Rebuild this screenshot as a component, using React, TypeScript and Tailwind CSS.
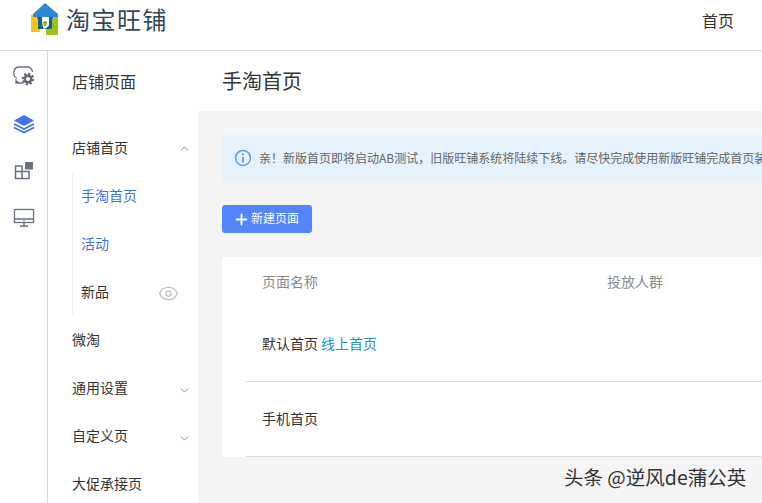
import { ChevronDown, ChevronUp, Eye, Plus } from 'lucide-react';

const cjk = { fontFamily: '"Noto Sans CJK SC", "Liberation Sans", sans-serif' };

function Logo() {
  return (
    <svg width="28" height="32" viewBox="0 0 28 32" className="shrink-0">
      <path d="M0 12 L9 10 V29 H0 Z" fill="#f5c518" />
      <path d="M15 25 H27 V32 H15 Z M19 12 H27 V25 H19 Z" fill="#9cc31c" />
      <path d="M14 0 L27 11 V14 H22 V16 H6 V14 H2 V11 Z" fill="#2f86d6" />
      <path d="M7 14 H21 V26 H7 Z" fill="#1b5f8f" />
      <path d="M11 14 H18 V21 C18 24 15 25 13 26 C11 23 11 19 11 14 Z" fill="#fff" />
      <path d="M12 19 C14 17 16 18 16 20 C16 22 14 23 13 24 Z" fill="#7fb52a" />
    </svg>
  );
}

function RailIcons() {
  return (
    <div className="flex flex-col items-center">
      <svg width="22" height="20" viewBox="0 0 22 20" fill="none" className="mt-[15px]">
        <path d="M4 12 C1 11 0.500 8 1 5.500 C1.500 2.500 3 1 6 1 H14 C17 1 19 2.500 19.500 6" stroke="#6b7080" strokeWidth="1.300" />
        <path d="M3 13 V17 H10 M3 17 L5 15" stroke="#6b7080" strokeWidth="1.300" />
        <circle cx="15" cy="13" r="5.200" stroke="#5f6475" strokeWidth="2" strokeDasharray="2.200 1.800" />
        <circle cx="15" cy="13" r="3.300" stroke="#5f6475" strokeWidth="2.400" />
      </svg>
      <svg width="22" height="20" viewBox="0 0 22 20" className="mt-[28px]">
        <path d="M11 1 L21 6.500 L11 12 L1 6.500 Z" fill="#3f74ee" />
        <path d="M1 10 L11 15 L21 10" stroke="#3f74ee" strokeWidth="1.800" fill="none" />
        <path d="M1 13.500 L11 18.500 L21 13.500" stroke="#3f74ee" strokeWidth="1.800" fill="none" />
      </svg>
      <svg width="20" height="20" viewBox="0 0 20 20" fill="none" className="mt-[27px]">
        <path d="M1.500 5 H8 V17.500 H1.500 Z M8 10.500 H15 V17.500 H8 Z M1.500 10.500 H8" stroke="#6b7080" strokeWidth="1.500" />
        <rect x="11" y="1" width="8" height="7.500" fill="#6b7080" />
      </svg>
      <svg width="22" height="20" viewBox="0 0 22 20" fill="none" className="mt-[27px]">
        <rect x="1.500" y="1.500" width="19" height="13" stroke="#6b7080" strokeWidth="1.300" />
        <path d="M1.500 11 H20.500 M7 18 H15 M11 14.500 V18" stroke="#6b7080" strokeWidth="1.300" />
        <circle cx="11" cy="12.800" r="0.800" fill="#6b7080" />
      </svg>
    </div>
  );
}

function NavItem({ label, open, closed }: { label: string; open?: boolean; closed?: boolean }) {
  return (
    <div className="h-12 flex items-center justify-between pl-6 pr-[7px] text-[14px] text-[#333]">
      <span className="-mt-[2px]">{label}</span>
      {open && <ChevronUp size={13} strokeWidth={1.200} className="text-[#666]" />}
      {closed && <ChevronDown size={13} strokeWidth={1.200} className="text-[#666] mt-1" />}
    </div>
  );
}

function SubItem({ label, active, eye }: { label: string; active?: boolean; eye?: boolean }) {
  return (
    <div className={`h-12 flex items-center justify-between pl-2 pr-[19px] text-[14px] ${active ? 'text-[#3f74dd]' : 'text-[#333]'}`}>
      <span className="-mt-[2px]">{label}</span>
      {eye && <Eye size={21} strokeWidth={1.700} className="text-[#c4c4c4] mt-[3px]" />}
    </div>
  );
}

export default function App() {
  return (
    <div className="relative w-[762px] h-[503px] overflow-hidden bg-white" style={cjk}>
      <header className="h-[51px] border-b border-[#d9d9d9] flex items-start justify-between pl-[31px] pr-[28px]">
        <div className="flex items-center gap-[7px] -mt-[1px]">
          <Logo />
          <span className="text-[24px] leading-[40px] tracking-[1.500px] text-[#33475b]">淘宝旺铺</span>
        </div>
        <span className="text-[16px] leading-[40px] text-[#333]">首页</span>
      </header>

      <div className="flex h-[452px]">
        <aside className="w-[48px] shrink-0 border-r border-[#d9d9d9]">
          <RailIcons />
        </aside>

        <nav className="w-[150px] shrink-0">
          <div className="h-[61px] pl-6 text-[16px] leading-[61px] text-[#333]">店铺页面</div>
          <div className="pt-3">
            <NavItem label="店铺首页" open />
            <div className="ml-6 border-l border-[#eeeeee]">
              <SubItem label="手淘首页" active />
              <SubItem label="活动" active />
              <SubItem label="新品" eye />
            </div>
            <NavItem label="微淘" />
            <NavItem label="通用设置" closed />
            <NavItem label="自定义页" closed />
            <NavItem label="大促承接页" />
          </div>
        </nav>

        <main className="flex-1 min-w-0">
          <div className="h-[60px] pl-6 text-[20px] leading-[60px] text-[#333] bg-white">手淘首页</div>
          <div className="h-full bg-[#f4f4f4] pl-6 pt-6">
            <div className="h-[46px] w-[600px] bg-[#e5f2fc] rounded-l-[3px] flex items-center pl-[12px] gap-[7px] overflow-hidden">
              <svg width="18" height="18" viewBox="0 0 18 18" fill="none" className="shrink-0">
                <circle cx="9" cy="9" r="7.500" stroke="#5b9be6" strokeWidth="1.500" />
                <path d="M9 8 V13.500" stroke="#5b9be6" strokeWidth="1.700" />
                <circle cx="9" cy="5.300" r="1.100" fill="#5b9be6" />
              </svg>
              <span className="text-[12px] text-[#666] whitespace-nowrap">亲！新版首页即将启动AB测试，旧版旺铺系统将陆续下线。请尽快完成使用新版旺铺完成首页装修</span>
            </div>

            <button className="mt-6 w-[90px] h-[28px] bg-[#5584ff] rounded-[3px] flex items-center pl-[12px] gap-0 text-white text-[12px]">
              <Plus size={17} strokeWidth={2.600} className="-ml-[1px]" />
              <span className="-mt-[2px] ml-[1px]">新建页面</span>
            </button>

            <section className="mt-6 w-[600px] h-[200px] bg-white rounded-l-[3px] pl-6">
              <div className="h-[50px] flex items-center pl-4 text-[14px] text-[#8c8c8c]">
                <span className="w-[345px] -mt-[2px]">页面名称</span>
                <span className="-mt-[2px]">投放人群</span>
              </div>
              <div className="h-[75px] flex items-center pl-4 text-[14px] text-[#333] border-b border-[#dcdcdc]">
                <span className="-mt-[2px]">默认首页</span>
                <span className="ml-[3px] -mt-[2px] text-[#2a8fc7]">线上首页</span>
              </div>
              <div className="h-[75px] flex items-center pl-4 text-[14px] text-[#333] border-b border-[#dcdcdc]">
                <span className="-mt-[2px]">手机首页</span>
              </div>
            </section>
          </div>
        </main>
      </div>

      <span className="absolute left-[564px] top-[464px] text-[19.500px] leading-[26px] text-[#333] whitespace-nowrap">头条 @逆风de蒲公英</span>
    </div>
  );
}
